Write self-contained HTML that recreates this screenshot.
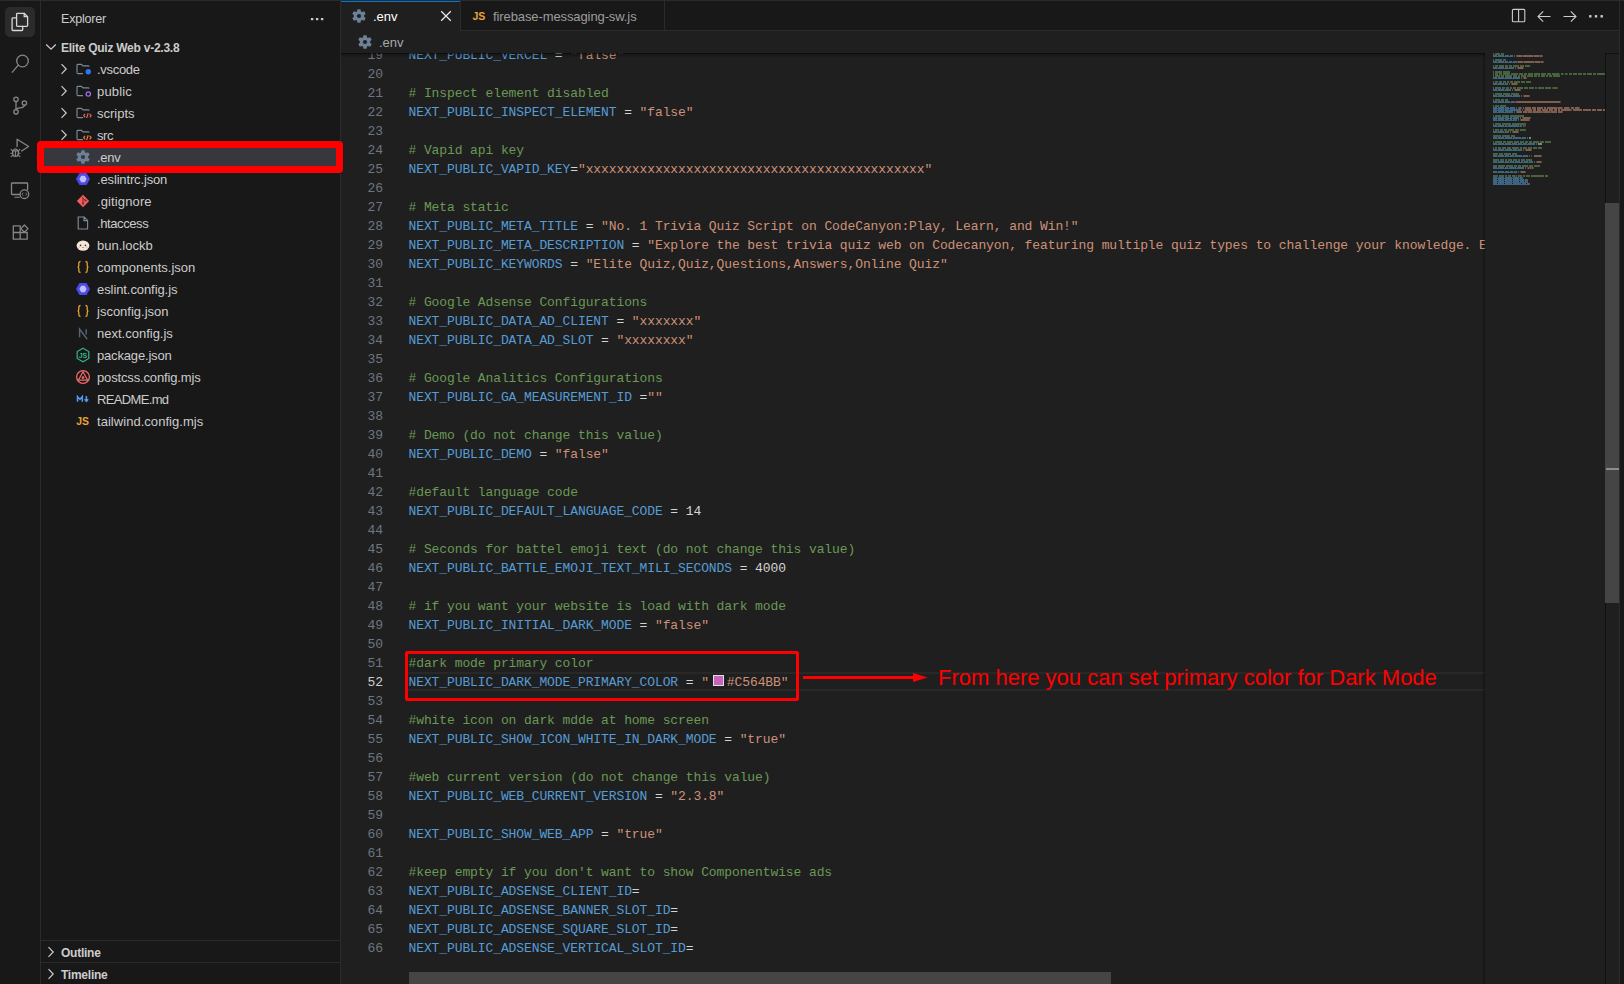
<!DOCTYPE html>
<html><head><meta charset="utf-8"><style>
*{box-sizing:border-box}
html,body{margin:0;padding:0}
body{width:1624px;height:984px;overflow:hidden;background:#181818;position:relative;font-family:"Liberation Sans",sans-serif;color:#cccccc}
.a{position:absolute}
.row{position:absolute;left:41px;width:299px;height:22px;line-height:22px;font-size:13px;white-space:pre;color:#cccccc}
.row .t{position:absolute;left:56px;top:1px}
.row svg{position:absolute;top:3px}
.ln{position:absolute;left:341px;width:42px;text-align:right;font-family:"Liberation Mono",monospace;font-size:13px;letter-spacing:-0.1px;height:19px;line-height:19px;color:#6e7681;white-space:pre}
.cl{position:absolute;left:408.5px;font-family:"Liberation Mono",monospace;font-size:13px;letter-spacing:-0.1px;height:19px;line-height:19px;white-space:pre}
</style></head><body>

<div class="a" style="left:0;top:0;width:1624px;height:1px;background:#2b2b2b"></div>
<div class="a" style="left:40px;top:1px;width:1px;height:983px;background:#2b2b2b"></div>
<div class="a" style="left:340px;top:1px;width:1px;height:983px;background:#2b2b2b"></div>
<div class="a" style="left:5px;top:7px;width:30px;height:30px;border-radius:5px;background:#2b2b2b"></div>
<svg class="a" style="left:0;top:0" width="40" height="250" viewBox="0 0 40 250" fill="none" stroke-linecap="round" stroke-linejoin="round">
<g stroke="#d7d7d7" stroke-width="1.3">
<path d="M16.6 14 Q16.6 13.3 17.4 13.3 H24.2 L27.6 16.7 V25.5 Q27.6 26.3 26.8 26.3 H17.4 Q16.6 26.3 16.6 25.5 Z"/>
<path d="M24.2 13.5 V16.7 H27.4"/>
<path d="M16.4 17.9 H12.9 Q12.1 17.9 12.1 18.7 V29.7 Q12.1 30.5 12.9 30.5 H21.9 Q22.7 30.5 22.7 29.7 V26.5"/>
</g>
<g stroke="#868686" stroke-width="1.3">
<circle cx="22.5" cy="61" r="5.8"/>
<path d="M18.3 65.2 L12.3 72.2"/>
<circle cx="16" cy="99.3" r="2.2"/><circle cx="24.4" cy="103" r="2.2"/><circle cx="16" cy="111.8" r="2.2"/>
<path d="M16 101.5 V109.6"/><path d="M24.4 105.2 Q24.4 107.5 20 107.8 Q16.5 108 16.2 109.6"/>
<path d="M17.1 146.4 V139.2 L28.6 146.5 L21.6 151"/>
<path d="M13.4 150.4 Q15.5 147.2 17.6 150.4"/>
<path d="M12.7 150.9 H18.3 V153.5 Q18.3 156.4 15.5 156.4 Q12.7 156.4 12.7 153.5 Z"/>
<path d="M11.1 149.3 L12.7 150.9 M18.3 150.9 L19.9 149.3 M10.9 153.3 H12.7 M18.3 153.3 H20.1 M11.1 156.7 L12.9 155.1 M18.1 155.1 L19.9 156.7 M15.5 151.6 V155.6" stroke-width="1.1"/>
<path d="M11.5 193.8 V183.6 Q11.5 183 12.1 183 H27 Q27.6 183 27.6 183.6 V189.5"/>
<path d="M11.5 193.8 Q11.5 194.5 12.2 194.5 H19.5"/><path d="M15 197.2 H19.3" stroke-width="1.1"/>
<circle cx="24.4" cy="194.2" r="4.3"/>
<path d="M23 193 L22 194.2 L23 195.4 M25.8 193 L26.8 194.2 L25.8 195.4" stroke-width="0.9"/>
<path d="M13.3 225.8 H20.2 V239.2 H13.3 Z M13.3 232.5 H27.2 V239.2 H20.2"/>
<path d="M20.8 228.6 L24.4 225 L28 228.6 L24.4 232.2 Z"/>
</g>
</svg>
<div class="a" style="left:61px;top:10px;font-size:12.5px;letter-spacing:-0.2px;line-height:18px;color:#cccccc">Explorer</div>
<div class="a" style="left:309px;top:10px;width:16px;height:16px"><svg width="16" height="16"><rect x="1.9" y="8" width="2.4" height="2.2" fill="#cccccc"/><rect x="6.9" y="8" width="2.4" height="2.2" fill="#cccccc"/><rect x="11.9" y="8" width="2.4" height="2.2" fill="#cccccc"/></svg></div>
<svg class="a" style="left:45px;top:43px" width="12" height="8" viewBox="0 0 12 8"><path d="M1.2 1.5 L6 6.2 L10.8 1.5" fill="none" stroke="#cccccc" stroke-width="1.2"/></svg>
<div class="a" style="left:61px;top:37px;height:22px;line-height:22px;font-size:12px;font-weight:700;letter-spacing:-0.25px;color:#cccccc;white-space:pre">Elite Quiz Web v-2.3.8</div>
<div class="row" style="top:58px;">
<svg class="a" style="left:19.3px;top:5px" width="8" height="12" viewBox="0 0 8 12"><path d="M1.5 1.2 L6.2 6 L1.5 10.8" fill="none" stroke="#cccccc" stroke-width="1.2"/></svg>
<svg class="a" style="left:35px;top:5px" width="16" height="13" viewBox="0 0 16 13"><path d="M1 9.5 V2.2 Q1 1.3 1.9 1.3 H5.4 L7 2.9 H12.2 Q13 2.9 13.2 3.6" fill="none" stroke="#7a8a9a" stroke-width="1.15"/><path d="M1 9.5 Q1 10.6 2 10.6 H7" fill="none" stroke="#7a8a9a" stroke-width="1.15"/><circle cx="12.3" cy="8.8" r="2.7" fill="#2f74f0"/></svg>
<span class="t" style="letter-spacing:-0.3px">.vscode</span></div>
<div class="row" style="top:80px;">
<svg class="a" style="left:19.3px;top:5px" width="8" height="12" viewBox="0 0 8 12"><path d="M1.5 1.2 L6.2 6 L1.5 10.8" fill="none" stroke="#cccccc" stroke-width="1.2"/></svg>
<svg class="a" style="left:35px;top:5px" width="16" height="13" viewBox="0 0 16 13"><path d="M1 9.5 V2.2 Q1 1.3 1.9 1.3 H5.4 L7 2.9 H12.2 Q13 2.9 13.2 3.6" fill="none" stroke="#7a8a9a" stroke-width="1.15"/><path d="M1 9.5 Q1 10.6 2 10.6 H7" fill="none" stroke="#7a8a9a" stroke-width="1.15"/><circle cx="12.3" cy="9" r="2.2" fill="none" stroke="#a56ef5" stroke-width="1.2"/></svg>
<span class="t" style="letter-spacing:0.15px">public</span></div>
<div class="row" style="top:102px;">
<svg class="a" style="left:19.3px;top:5px" width="8" height="12" viewBox="0 0 8 12"><path d="M1.5 1.2 L6.2 6 L1.5 10.8" fill="none" stroke="#cccccc" stroke-width="1.2"/></svg>
<svg class="a" style="left:35px;top:5px" width="16" height="13" viewBox="0 0 16 13"><path d="M1 9.5 V2.2 Q1 1.3 1.9 1.3 H5.4 L7 2.9 H12.2 Q13 2.9 13.2 3.6" fill="none" stroke="#7a8a9a" stroke-width="1.15"/><path d="M1 9.5 Q1 10.6 2 10.6 H7" fill="none" stroke="#7a8a9a" stroke-width="1.15"/><path d="M9.2 6.8 L7.6 8.6 L9.2 10.4 M13.6 6.8 L15.2 8.6 L13.6 10.4 M12.2 6.3 L10.6 11" fill="none" stroke="#e06c62" stroke-width="1.1"/></svg>
<span class="t" style="letter-spacing:0px">scripts</span></div>
<div class="row" style="top:124px;">
<svg class="a" style="left:19.3px;top:5px" width="8" height="12" viewBox="0 0 8 12"><path d="M1.5 1.2 L6.2 6 L1.5 10.8" fill="none" stroke="#cccccc" stroke-width="1.2"/></svg>
<svg class="a" style="left:35px;top:5px" width="16" height="13" viewBox="0 0 16 13"><path d="M1 9.5 V2.2 Q1 1.3 1.9 1.3 H5.4 L7 2.9 H12.2 Q13 2.9 13.2 3.6" fill="none" stroke="#7a8a9a" stroke-width="1.15"/><path d="M1 9.5 Q1 10.6 2 10.6 H7" fill="none" stroke="#7a8a9a" stroke-width="1.15"/><path d="M9.2 6.8 L7.6 8.6 L9.2 10.4 M13.6 6.8 L15.2 8.6 L13.6 10.4 M12.2 6.3 L10.6 11" fill="none" stroke="#e87a3a" stroke-width="1.2"/></svg>
<span class="t" style="letter-spacing:-0.4px">src</span></div>
<div class="row" style="top:146px;background:#37373d;">
<svg class="a" style="left:34px;top:3px" width="16" height="16" viewBox="0 0 16 16"><path d="M6.54 1.15 L9.46 1.15 L10.05 3.40 L10.96 3.92 L13.20 3.32 L14.66 5.84 L13.01 7.47 L13.01 8.53 L14.66 10.16 L13.20 12.68 L10.96 12.08 L10.05 12.60 L9.46 14.85 L6.54 14.85 L5.95 12.60 L5.04 12.08 L2.80 12.68 L1.34 10.16 L2.99 8.53 L2.99 7.47 L1.34 5.84 L2.80 3.32 L5.04 3.92 L5.95 3.40 Z" fill="#6d8096"/><circle cx="8" cy="8" r="2.10" fill="#37373d"/></svg>
<span class="t" style="letter-spacing:-0.3px">.env</span></div>
<div class="row" style="top:168px;">
<svg class="a" style="left:34px;top:3px" width="16" height="16" viewBox="0 0 16 16"><path d="M4.5 2 H11.5 L15 8 L11.5 14 H4.5 L1 8 Z" fill="#4d48e8"/><path d="M6.2 4.8 H9.8 L11.6 8 L9.8 11.2 H6.2 L4.4 8 Z" fill="#b9c0ff"/></svg>
<span class="t" style="letter-spacing:-0.15px">.eslintrc.json</span></div>
<div class="row" style="top:190px;">
<svg class="a" style="left:34px;top:3px" width="16" height="16" viewBox="0 0 16 16"><path d="M8 1.8 L14.2 8 L8 14.2 L1.8 8 Z" fill="#ee6060"/><path d="M6.6 3.6 L8 5 V10.6 M8 5.2 L10.6 7.6" stroke="#7a2a2a" stroke-width="1" fill="none"/><circle cx="8" cy="10.6" r="1.1" fill="#7a2a2a"/><circle cx="10.6" cy="7.6" r="1.1" fill="#7a2a2a"/></svg>
<span class="t" style="letter-spacing:0.12px">.gitignore</span></div>
<div class="row" style="top:212px;">
<svg class="a" style="left:34px;top:3px" width="16" height="16" viewBox="0 0 16 16"><path d="M3.2 2 H9.2 L12.6 5.4 V13.4 Q12.6 14 12 14 H3.8 Q3.2 14 3.2 13.4 Z M9 2 V5.6 H12.6" fill="none" stroke="#7a8a9a" stroke-width="1.15"/></svg>
<span class="t" style="letter-spacing:-0.4px">.htaccess</span></div>
<div class="row" style="top:234px;">
<svg class="a" style="left:34px;top:3px" width="16" height="16" viewBox="0 0 16 16"><ellipse cx="8" cy="8.6" rx="6.4" ry="5.2" fill="#f5e8d6"/><circle cx="5.6" cy="8.4" r="0.8" fill="#333"/><circle cx="10.4" cy="8.4" r="0.8" fill="#333"/><path d="M6.8 10 Q8 11.6 9.2 10 Z" fill="#c0392b"/><ellipse cx="4.3" cy="10" rx="1" ry="0.6" fill="#f3a0a8"/><ellipse cx="11.7" cy="10" rx="1" ry="0.6" fill="#f3a0a8"/></svg>
<span class="t" style="letter-spacing:0px">bun.lockb</span></div>
<div class="row" style="top:256px;">
<svg class="a" style="left:34px;top:3px" width="16" height="16" viewBox="0 0 16 16"><path d="M5.5 2.5 Q3.8 2.5 3.8 4.2 V6.6 Q3.8 8 2.6 8 Q3.8 8 3.8 9.4 V11.8 Q3.8 13.5 5.5 13.5 M10.5 2.5 Q12.2 2.5 12.2 4.2 V6.6 Q12.2 8 13.4 8 Q12.2 8 12.2 9.4 V11.8 Q12.2 13.5 10.5 13.5" fill="none" stroke="#e3a22f" stroke-width="1.3"/></svg>
<span class="t" style="letter-spacing:0px">components.json</span></div>
<div class="row" style="top:278px;">
<svg class="a" style="left:34px;top:3px" width="16" height="16" viewBox="0 0 16 16"><path d="M4.5 2 H11.5 L15 8 L11.5 14 H4.5 L1 8 Z" fill="#4d48e8"/><path d="M6.2 4.8 H9.8 L11.6 8 L9.8 11.2 H6.2 L4.4 8 Z" fill="#b9c0ff"/></svg>
<span class="t" style="letter-spacing:-0.08px">eslint.config.js</span></div>
<div class="row" style="top:300px;">
<svg class="a" style="left:34px;top:3px" width="16" height="16" viewBox="0 0 16 16"><path d="M5.5 2.5 Q3.8 2.5 3.8 4.2 V6.6 Q3.8 8 2.6 8 Q3.8 8 3.8 9.4 V11.8 Q3.8 13.5 5.5 13.5 M10.5 2.5 Q12.2 2.5 12.2 4.2 V6.6 Q12.2 8 13.4 8 Q12.2 8 12.2 9.4 V11.8 Q12.2 13.5 10.5 13.5" fill="none" stroke="#e3a22f" stroke-width="1.3"/></svg>
<span class="t" style="letter-spacing:0px">jsconfig.json</span></div>
<div class="row" style="top:322px;">
<svg class="a" style="left:34px;top:3px" width="16" height="16" viewBox="0 0 16 16"><path d="M4.6 12.2 V4.2 L12.2 14.2 M11.2 4.2 V9.5" fill="none" stroke="#586677" stroke-width="1.4"/></svg>
<span class="t" style="letter-spacing:0px">next.config.js</span></div>
<div class="row" style="top:344px;">
<svg class="a" style="left:34px;top:3px" width="16" height="16" viewBox="0 0 16 16"><path d="M8 1.3 L13.8 4.6 V11.4 L8 14.7 L2.2 11.4 V4.6 Z" fill="none" stroke="#33b38e" stroke-width="1.2"/><text x="8" y="10.8" font-size="7" font-weight="700" text-anchor="middle" fill="#33b38e" font-family="Liberation Sans">JS</text></svg>
<span class="t" style="letter-spacing:-0.17px">package.json</span></div>
<div class="row" style="top:366px;">
<svg class="a" style="left:34px;top:3px" width="16" height="16" viewBox="0 0 16 16"><circle cx="8" cy="8" r="6.4" fill="none" stroke="#ee6a6a" stroke-width="1.3"/><path d="M8 2.8 L12.6 11.2 H3.4 Z" fill="none" stroke="#ee6a6a" stroke-width="1.2"/><circle cx="8" cy="8.6" r="1.4" fill="#ee6a6a"/></svg>
<span class="t" style="letter-spacing:-0.15px">postcss.config.mjs</span></div>
<div class="row" style="top:388px;">
<svg class="a" style="left:34px;top:3px" width="16" height="16" viewBox="0 0 16 16"><path d="M2.5 10.8 V5.6 L4.9 8.4 L7.3 5.6 V10.8" fill="none" stroke="#4f9cf0" stroke-width="1.5"/><path d="M11.4 5 V10 M9.6 8.3 L11.4 10.3 L13.2 8.3" fill="none" stroke="#4f9cf0" stroke-width="1.5"/></svg>
<span class="t" style="letter-spacing:-0.65px">README.md</span></div>
<div class="row" style="top:410px;">
<svg class="a" style="left:34px;top:3px" width="16" height="16" viewBox="0 0 16 16"><text x="7.6" y="12.4" font-size="10.4" font-weight="700" text-anchor="middle" fill="#e8a33a" font-family="Liberation Sans">JS</text></svg>
<span class="t" style="letter-spacing:0.04px">tailwind.config.mjs</span></div>
<div class="a" style="left:41px;top:940px;width:299px;height:1px;background:#2b2b2b"></div>
<div class="a" style="left:41px;top:962px;width:299px;height:1px;background:#2b2b2b"></div>
<svg class="a" style="left:47px;top:946px" width="8" height="12" viewBox="0 0 8 12"><path d="M1.5 1.2 L6.2 6 L1.5 10.8" fill="none" stroke="#cccccc" stroke-width="1.2"/></svg>
<div class="a" style="left:61px;top:942px;height:22px;line-height:22px;font-size:12px;font-weight:700;letter-spacing:-0.25px;white-space:pre">Outline</div>
<svg class="a" style="left:47px;top:968px" width="8" height="12" viewBox="0 0 8 12"><path d="M1.5 1.2 L6.2 6 L1.5 10.8" fill="none" stroke="#cccccc" stroke-width="1.2"/></svg>
<div class="a" style="left:61px;top:964px;height:22px;line-height:22px;font-size:12px;font-weight:700;letter-spacing:-0.25px;white-space:pre">Timeline</div>
<div class="a" style="left:341px;top:31px;width:1278px;height:953px;background:#1f1f1f"></div>
<div class="a" style="left:341px;top:1px;width:1278px;height:29px;background:#181818"></div>
<div class="a" style="left:341px;top:30px;width:1278px;height:1px;background:#2b2b2b"></div>
<div class="a" style="left:341px;top:1px;width:119px;height:30px;background:#1f1f1f;border-top:1px solid #0078d4"></div>
<div class="a" style="left:460px;top:1px;width:1px;height:30px;background:#2b2b2b"></div>
<svg class="a" style="left:351px;top:7.8px" width="16" height="16" viewBox="0 0 16 16"><path d="M6.54 1.15 L9.46 1.15 L10.05 3.40 L10.96 3.92 L13.20 3.32 L14.66 5.84 L13.01 7.47 L13.01 8.53 L14.66 10.16 L13.20 12.68 L10.96 12.08 L10.05 12.60 L9.46 14.85 L6.54 14.85 L5.95 12.60 L5.04 12.08 L2.80 12.68 L1.34 10.16 L2.99 8.53 L2.99 7.47 L1.34 5.84 L2.80 3.32 L5.04 3.92 L5.95 3.40 Z" fill="#6d8096"/><circle cx="8" cy="8" r="2.10" fill="#1f1f1f"/></svg>
<div class="a" style="left:373px;top:2px;height:29px;line-height:29px;font-size:13px;color:#ffffff;white-space:pre">.env</div>
<svg class="a" style="left:440px;top:10px" width="12" height="12" viewBox="0 0 12 12"><path d="M1.2 1.2 L10.8 10.8 M10.8 1.2 L1.2 10.8" stroke="#e8e8e8" stroke-width="1.3"/></svg>
<div class="a" style="left:664px;top:1px;width:1px;height:29px;background:#2b2b2b"></div>
<div class="a" style="left:472.5px;top:8.5px;height:14px;line-height:14px;font-size:10.5px;font-weight:700;color:#e8a33a;white-space:pre">JS</div>
<div class="a" style="left:493px;top:2px;height:29px;line-height:29px;font-size:13px;color:#9d9d9d;white-space:pre;letter-spacing:-0.1px">firebase-messaging-sw.js</div>
<svg class="a" style="left:1500px;top:1px" width="119" height="29" viewBox="0 0 119 29" fill="none" stroke="#cccccc" stroke-width="1.1">
<rect x="12.4" y="8.4" width="12.4" height="12.4" rx="1"/><path d="M18.6 8.4 V20.8"/>
<path d="M50.5 15.5 H38 M43.2 10.3 L38 15.5 L43.2 20.7"/>
<path d="M63.5 15.5 H76 M70.8 10.3 L76 15.5 L70.8 20.7"/>
<rect x="89.1" y="14.1" width="2.4" height="2.4" fill="#cccccc" stroke="none"/><rect x="94.8" y="14.1" width="2.4" height="2.4" fill="#cccccc" stroke="none"/><rect x="100.5" y="14.1" width="2.4" height="2.4" fill="#cccccc" stroke="none"/>
</svg>
<div class="a" style="left:1619px;top:1px;width:1px;height:983px;background:#2b2b2b"></div>
<div class="a" style="left:1620px;top:1px;width:4px;height:983px;background:#181818"></div>
<div class="a" style="left:341px;top:53px;width:1264px;height:931px;overflow:hidden">
<div class="a" style="left:-341px;top:-53px;width:1624px;height:984px">
<div class="a" style="left:408px;top:672px;width:1077px;height:19px;border-top:2px solid #282828;border-bottom:2px solid #282828"></div>
<div class="ln" style="top:46px;color:#6e7681">19</div>
<div class="ln" style="top:65px;color:#6e7681">20</div>
<div class="ln" style="top:84px;color:#6e7681">21</div>
<div class="ln" style="top:103px;color:#6e7681">22</div>
<div class="ln" style="top:122px;color:#6e7681">23</div>
<div class="ln" style="top:141px;color:#6e7681">24</div>
<div class="ln" style="top:160px;color:#6e7681">25</div>
<div class="ln" style="top:179px;color:#6e7681">26</div>
<div class="ln" style="top:198px;color:#6e7681">27</div>
<div class="ln" style="top:217px;color:#6e7681">28</div>
<div class="ln" style="top:236px;color:#6e7681">29</div>
<div class="ln" style="top:255px;color:#6e7681">30</div>
<div class="ln" style="top:274px;color:#6e7681">31</div>
<div class="ln" style="top:293px;color:#6e7681">32</div>
<div class="ln" style="top:312px;color:#6e7681">33</div>
<div class="ln" style="top:331px;color:#6e7681">34</div>
<div class="ln" style="top:350px;color:#6e7681">35</div>
<div class="ln" style="top:369px;color:#6e7681">36</div>
<div class="ln" style="top:388px;color:#6e7681">37</div>
<div class="ln" style="top:407px;color:#6e7681">38</div>
<div class="ln" style="top:426px;color:#6e7681">39</div>
<div class="ln" style="top:445px;color:#6e7681">40</div>
<div class="ln" style="top:464px;color:#6e7681">41</div>
<div class="ln" style="top:483px;color:#6e7681">42</div>
<div class="ln" style="top:502px;color:#6e7681">43</div>
<div class="ln" style="top:521px;color:#6e7681">44</div>
<div class="ln" style="top:540px;color:#6e7681">45</div>
<div class="ln" style="top:559px;color:#6e7681">46</div>
<div class="ln" style="top:578px;color:#6e7681">47</div>
<div class="ln" style="top:597px;color:#6e7681">48</div>
<div class="ln" style="top:616px;color:#6e7681">49</div>
<div class="ln" style="top:635px;color:#6e7681">50</div>
<div class="ln" style="top:654px;color:#6e7681">51</div>
<div class="ln" style="top:673px;color:#cccccc">52</div>
<div class="ln" style="top:692px;color:#6e7681">53</div>
<div class="ln" style="top:711px;color:#6e7681">54</div>
<div class="ln" style="top:730px;color:#6e7681">55</div>
<div class="ln" style="top:749px;color:#6e7681">56</div>
<div class="ln" style="top:768px;color:#6e7681">57</div>
<div class="ln" style="top:787px;color:#6e7681">58</div>
<div class="ln" style="top:806px;color:#6e7681">59</div>
<div class="ln" style="top:825px;color:#6e7681">60</div>
<div class="ln" style="top:844px;color:#6e7681">61</div>
<div class="ln" style="top:863px;color:#6e7681">62</div>
<div class="ln" style="top:882px;color:#6e7681">63</div>
<div class="ln" style="top:901px;color:#6e7681">64</div>
<div class="ln" style="top:920px;color:#6e7681">65</div>
<div class="ln" style="top:939px;color:#6e7681">66</div>
<div class="a" style="left:0;top:0;width:1485px;height:984px;overflow:hidden">
<div class="cl" style="top:46px"><span style="color:#569cd6">NEXT_PUBLIC_VERCEL</span><span style="color:#d4d4d4"> = </span><span style="color:#ce9178">&quot;false&quot;</span></div>
<div class="cl" style="top:84px"><span style="color:#6a9955"># Inspect element disabled</span></div>
<div class="cl" style="top:103px"><span style="color:#569cd6">NEXT_PUBLIC_INSPECT_ELEMENT</span><span style="color:#d4d4d4"> = </span><span style="color:#ce9178">&quot;false&quot;</span></div>
<div class="cl" style="top:141px"><span style="color:#6a9955"># Vapid api key</span></div>
<div class="cl" style="top:160px"><span style="color:#569cd6">NEXT_PUBLIC_VAPID_KEY</span><span style="color:#d4d4d4">=</span><span style="color:#ce9178">&quot;xxxxxxxxxxxxxxxxxxxxxxxxxxxxxxxxxxxxxxxxxxxx&quot;</span></div>
<div class="cl" style="top:198px"><span style="color:#6a9955"># Meta static</span></div>
<div class="cl" style="top:217px"><span style="color:#569cd6">NEXT_PUBLIC_META_TITLE</span><span style="color:#d4d4d4"> = </span><span style="color:#ce9178">&quot;No. 1 Trivia Quiz Script on CodeCanyon:Play, Learn, and Win!&quot;</span></div>
<div class="cl" style="top:236px"><span style="color:#569cd6">NEXT_PUBLIC_META_DESCRIPTION</span><span style="color:#d4d4d4"> = </span><span style="color:#ce9178">&quot;Explore the best trivia quiz web on Codecanyon, featuring multiple quiz types to challenge your knowledge. Engage with fun and exciting quizzes&quot;</span></div>
<div class="cl" style="top:255px"><span style="color:#569cd6">NEXT_PUBLIC_KEYWORDS</span><span style="color:#d4d4d4"> = </span><span style="color:#ce9178">&quot;Elite Quiz,Quiz,Questions,Answers,Online Quiz&quot;</span></div>
<div class="cl" style="top:293px"><span style="color:#6a9955"># Google Adsense Configurations</span></div>
<div class="cl" style="top:312px"><span style="color:#569cd6">NEXT_PUBLIC_DATA_AD_CLIENT</span><span style="color:#d4d4d4"> = </span><span style="color:#ce9178">&quot;xxxxxxx&quot;</span></div>
<div class="cl" style="top:331px"><span style="color:#569cd6">NEXT_PUBLIC_DATA_AD_SLOT</span><span style="color:#d4d4d4"> = </span><span style="color:#ce9178">&quot;xxxxxxxx&quot;</span></div>
<div class="cl" style="top:369px"><span style="color:#6a9955"># Google Analitics Configurations</span></div>
<div class="cl" style="top:388px"><span style="color:#569cd6">NEXT_PUBLIC_GA_MEASUREMENT_ID</span><span style="color:#d4d4d4"> =</span><span style="color:#ce9178">&quot;&quot;</span></div>
<div class="cl" style="top:426px"><span style="color:#6a9955"># Demo (do not change this value)</span></div>
<div class="cl" style="top:445px"><span style="color:#569cd6">NEXT_PUBLIC_DEMO</span><span style="color:#d4d4d4"> = </span><span style="color:#ce9178">&quot;false&quot;</span></div>
<div class="cl" style="top:483px"><span style="color:#6a9955">#default language code</span></div>
<div class="cl" style="top:502px"><span style="color:#569cd6">NEXT_PUBLIC_DEFAULT_LANGUAGE_CODE</span><span style="color:#d4d4d4"> = </span><span style="color:#d4d4d4">14</span></div>
<div class="cl" style="top:540px"><span style="color:#6a9955"># Seconds for battel emoji text (do not change this value)</span></div>
<div class="cl" style="top:559px"><span style="color:#569cd6">NEXT_PUBLIC_BATTLE_EMOJI_TEXT_MILI_SECONDS</span><span style="color:#d4d4d4"> = </span><span style="color:#d4d4d4">4000</span></div>
<div class="cl" style="top:597px"><span style="color:#6a9955"># if you want your website is load with dark mode</span></div>
<div class="cl" style="top:616px"><span style="color:#569cd6">NEXT_PUBLIC_INITIAL_DARK_MODE</span><span style="color:#d4d4d4"> = </span><span style="color:#ce9178">&quot;false&quot;</span></div>
<div class="cl" style="top:654px"><span style="color:#6a9955">#dark mode primary color</span></div>
<div class="cl" style="top:673px"><span style="color:#569cd6">NEXT_PUBLIC_DARK_MODE_PRIMARY_COLOR</span><span style="color:#d4d4d4"> = </span><span style="color:#ce9178">&quot;</span><span style="display:inline-block;width:18px;height:1px;position:relative"><span style="position:absolute;left:4px;top:-10px;width:11px;height:11px;background:#c564bb;border:1px solid #e0e0e0"></span></span><span style="color:#ce9178">#C564BB&quot;</span></div>
<div class="cl" style="top:711px"><span style="color:#6a9955">#white icon on dark mdde at home screen</span></div>
<div class="cl" style="top:730px"><span style="color:#569cd6">NEXT_PUBLIC_SHOW_ICON_WHITE_IN_DARK_MODE</span><span style="color:#d4d4d4"> = </span><span style="color:#ce9178">&quot;true&quot;</span></div>
<div class="cl" style="top:768px"><span style="color:#6a9955">#web current version (do not change this value)</span></div>
<div class="cl" style="top:787px"><span style="color:#569cd6">NEXT_PUBLIC_WEB_CURRENT_VERSION</span><span style="color:#d4d4d4"> = </span><span style="color:#ce9178">&quot;2.3.8&quot;</span></div>
<div class="cl" style="top:825px"><span style="color:#569cd6">NEXT_PUBLIC_SHOW_WEB_APP</span><span style="color:#d4d4d4"> = </span><span style="color:#ce9178">&quot;true&quot;</span></div>
<div class="cl" style="top:863px"><span style="color:#6a9955">#keep empty if you don&#x27;t want to show Componentwise ads</span></div>
<div class="cl" style="top:882px"><span style="color:#569cd6">NEXT_PUBLIC_ADSENSE_CLIENT_ID</span><span style="color:#d4d4d4">=</span></div>
<div class="cl" style="top:901px"><span style="color:#569cd6">NEXT_PUBLIC_ADSENSE_BANNER_SLOT_ID</span><span style="color:#d4d4d4">=</span></div>
<div class="cl" style="top:920px"><span style="color:#569cd6">NEXT_PUBLIC_ADSENSE_SQUARE_SLOT_ID</span><span style="color:#d4d4d4">=</span></div>
<div class="cl" style="top:939px"><span style="color:#569cd6">NEXT_PUBLIC_ADSENSE_VERTICAL_SLOT_ID</span><span style="color:#d4d4d4">=</span></div>
</div>
</div></div>
<div class="a" style="left:341px;top:31px;width:1278px;height:22px;background:#1f1f1f"></div>
<svg class="a" style="left:357px;top:34px" width="16" height="16" viewBox="0 0 16 16"><path d="M6.54 1.15 L9.46 1.15 L10.05 3.40 L10.96 3.92 L13.20 3.32 L14.66 5.84 L13.01 7.47 L13.01 8.53 L14.66 10.16 L13.20 12.68 L10.96 12.08 L10.05 12.60 L9.46 14.85 L6.54 14.85 L5.95 12.60 L5.04 12.08 L2.80 12.68 L1.34 10.16 L2.99 8.53 L2.99 7.47 L1.34 5.84 L2.80 3.32 L5.04 3.92 L5.95 3.40 Z" fill="#6d8096"/><circle cx="8" cy="8" r="2.10" fill="#1f1f1f"/></svg>
<div class="a" style="left:379px;top:32px;height:22px;line-height:22px;font-size:13px;color:#a9a9a9;white-space:pre">.env</div>
<div class="a" style="left:341px;top:53px;width:1144px;height:5px;background:linear-gradient(rgba(0,0,0,0.75),rgba(0,0,0,0.25) 30%,rgba(0,0,0,0))"></div>
<div class="a" style="left:1493px;top:53px;width:1px;height:2px;background:rgba(106,153,85,0.55)"></div>
<div class="a" style="left:1495px;top:53px;width:5px;height:2px;background:rgba(106,153,85,0.55)"></div>
<div class="a" style="left:1501px;top:53px;width:3px;height:2px;background:rgba(106,153,85,0.55)"></div>
<div class="a" style="left:1493px;top:55px;width:4px;height:2px;background:rgba(86,156,214,0.55)"></div>
<div class="a" style="left:1497px;top:56px;width:1px;height:1px;background:rgba(86,156,214,0.5)"></div>
<div class="a" style="left:1498px;top:55px;width:6px;height:2px;background:rgba(86,156,214,0.55)"></div>
<div class="a" style="left:1504px;top:56px;width:1px;height:1px;background:rgba(86,156,214,0.5)"></div>
<div class="a" style="left:1505px;top:55px;width:4px;height:2px;background:rgba(86,156,214,0.55)"></div>
<div class="a" style="left:1509px;top:56px;width:1px;height:1px;background:rgba(86,156,214,0.5)"></div>
<div class="a" style="left:1510px;top:55px;width:3px;height:2px;background:rgba(86,156,214,0.55)"></div>
<div class="a" style="left:1514px;top:55px;width:1px;height:2px;background:rgba(212,212,212,0.3)"></div>
<div class="a" style="left:1516px;top:55px;width:1px;height:2px;background:rgba(206,145,120,0.3)"></div>
<div class="a" style="left:1517px;top:55px;width:5px;height:2px;background:rgba(206,145,120,0.55)"></div>
<div class="a" style="left:1522px;top:55px;width:1px;height:2px;background:rgba(206,145,120,0.3)"></div>
<div class="a" style="left:1523px;top:55px;width:10px;height:2px;background:rgba(206,145,120,0.55)"></div>
<div class="a" style="left:1533px;top:55px;width:1px;height:2px;background:rgba(206,145,120,0.3)"></div>
<div class="a" style="left:1534px;top:55px;width:5px;height:2px;background:rgba(206,145,120,0.55)"></div>
<div class="a" style="left:1539px;top:55px;width:1px;height:2px;background:rgba(206,145,120,0.3)"></div>
<div class="a" style="left:1540px;top:55px;width:2px;height:2px;background:rgba(206,145,120,0.55)"></div>
<div class="a" style="left:1542px;top:55px;width:1px;height:2px;background:rgba(206,145,120,0.3)"></div>
<div class="a" style="left:1493px;top:59px;width:1px;height:2px;background:rgba(106,153,85,0.55)"></div>
<div class="a" style="left:1495px;top:59px;width:7px;height:2px;background:rgba(106,153,85,0.55)"></div>
<div class="a" style="left:1503px;top:59px;width:3px;height:2px;background:rgba(106,153,85,0.55)"></div>
<div class="a" style="left:1493px;top:61px;width:4px;height:2px;background:rgba(86,156,214,0.55)"></div>
<div class="a" style="left:1497px;top:62px;width:1px;height:1px;background:rgba(86,156,214,0.5)"></div>
<div class="a" style="left:1498px;top:61px;width:6px;height:2px;background:rgba(86,156,214,0.55)"></div>
<div class="a" style="left:1504px;top:62px;width:1px;height:1px;background:rgba(86,156,214,0.5)"></div>
<div class="a" style="left:1505px;top:61px;width:3px;height:2px;background:rgba(86,156,214,0.55)"></div>
<div class="a" style="left:1508px;top:62px;width:1px;height:1px;background:rgba(86,156,214,0.5)"></div>
<div class="a" style="left:1509px;top:61px;width:3px;height:2px;background:rgba(86,156,214,0.55)"></div>
<div class="a" style="left:1512px;top:62px;width:1px;height:1px;background:rgba(86,156,214,0.5)"></div>
<div class="a" style="left:1513px;top:61px;width:3px;height:2px;background:rgba(86,156,214,0.55)"></div>
<div class="a" style="left:1516px;top:61px;width:1px;height:2px;background:rgba(212,212,212,0.3)"></div>
<div class="a" style="left:1517px;top:61px;width:1px;height:2px;background:rgba(206,145,120,0.3)"></div>
<div class="a" style="left:1518px;top:61px;width:5px;height:2px;background:rgba(206,145,120,0.55)"></div>
<div class="a" style="left:1523px;top:61px;width:1px;height:2px;background:rgba(206,145,120,0.3)"></div>
<div class="a" style="left:1524px;top:61px;width:10px;height:2px;background:rgba(206,145,120,0.55)"></div>
<div class="a" style="left:1534px;top:61px;width:1px;height:2px;background:rgba(206,145,120,0.3)"></div>
<div class="a" style="left:1535px;top:61px;width:5px;height:2px;background:rgba(206,145,120,0.55)"></div>
<div class="a" style="left:1540px;top:61px;width:1px;height:2px;background:rgba(206,145,120,0.3)"></div>
<div class="a" style="left:1541px;top:61px;width:2px;height:2px;background:rgba(206,145,120,0.55)"></div>
<div class="a" style="left:1543px;top:61px;width:1px;height:2px;background:rgba(206,145,120,0.3)"></div>
<div class="a" style="left:1493px;top:65px;width:1px;height:2px;background:rgba(106,153,85,0.55)"></div>
<div class="a" style="left:1495px;top:65px;width:3px;height:2px;background:rgba(106,153,85,0.55)"></div>
<div class="a" style="left:1499px;top:65px;width:5px;height:2px;background:rgba(106,153,85,0.55)"></div>
<div class="a" style="left:1505px;top:65px;width:3px;height:2px;background:rgba(106,153,85,0.55)"></div>
<div class="a" style="left:1509px;top:65px;width:3px;height:2px;background:rgba(106,153,85,0.55)"></div>
<div class="a" style="left:1513px;top:65px;width:6px;height:2px;background:rgba(106,153,85,0.55)"></div>
<div class="a" style="left:1520px;top:65px;width:4px;height:2px;background:rgba(106,153,85,0.55)"></div>
<div class="a" style="left:1525px;top:65px;width:5px;height:2px;background:rgba(106,153,85,0.55)"></div>
<div class="a" style="left:1493px;top:67px;width:4px;height:2px;background:rgba(86,156,214,0.55)"></div>
<div class="a" style="left:1497px;top:68px;width:1px;height:1px;background:rgba(86,156,214,0.5)"></div>
<div class="a" style="left:1498px;top:67px;width:6px;height:2px;background:rgba(86,156,214,0.55)"></div>
<div class="a" style="left:1504px;top:68px;width:1px;height:1px;background:rgba(86,156,214,0.5)"></div>
<div class="a" style="left:1505px;top:67px;width:3px;height:2px;background:rgba(86,156,214,0.55)"></div>
<div class="a" style="left:1508px;top:68px;width:1px;height:1px;background:rgba(86,156,214,0.5)"></div>
<div class="a" style="left:1509px;top:67px;width:5px;height:2px;background:rgba(86,156,214,0.55)"></div>
<div class="a" style="left:1515px;top:67px;width:1px;height:2px;background:rgba(212,212,212,0.3)"></div>
<div class="a" style="left:1517px;top:67px;width:1px;height:2px;background:rgba(206,145,120,0.3)"></div>
<div class="a" style="left:1518px;top:67px;width:5px;height:2px;background:rgba(206,145,120,0.55)"></div>
<div class="a" style="left:1523px;top:67px;width:1px;height:2px;background:rgba(206,145,120,0.3)"></div>
<div class="a" style="left:1493px;top:71px;width:1px;height:2px;background:rgba(106,153,85,0.55)"></div>
<div class="a" style="left:1495px;top:71px;width:7px;height:2px;background:rgba(106,153,85,0.55)"></div>
<div class="a" style="left:1503px;top:71px;width:7px;height:2px;background:rgba(106,153,85,0.55)"></div>
<div class="a" style="left:1493px;top:73px;width:1px;height:2px;background:rgba(106,153,85,0.55)"></div>
<div class="a" style="left:1495px;top:73px;width:3px;height:2px;background:rgba(106,153,85,0.55)"></div>
<div class="a" style="left:1499px;top:73px;width:3px;height:2px;background:rgba(106,153,85,0.55)"></div>
<div class="a" style="left:1503px;top:73px;width:7px;height:2px;background:rgba(106,153,85,0.55)"></div>
<div class="a" style="left:1511px;top:73px;width:7px;height:2px;background:rgba(106,153,85,0.55)"></div>
<div class="a" style="left:1519px;top:73px;width:4px;height:2px;background:rgba(106,153,85,0.55)"></div>
<div class="a" style="left:1524px;top:73px;width:3px;height:2px;background:rgba(106,153,85,0.55)"></div>
<div class="a" style="left:1528px;top:73px;width:5px;height:2px;background:rgba(106,153,85,0.55)"></div>
<div class="a" style="left:1534px;top:73px;width:6px;height:2px;background:rgba(106,153,85,0.55)"></div>
<div class="a" style="left:1541px;top:73px;width:5px;height:2px;background:rgba(106,153,85,0.55)"></div>
<div class="a" style="left:1547px;top:73px;width:4px;height:2px;background:rgba(106,153,85,0.55)"></div>
<div class="a" style="left:1552px;top:73px;width:7px;height:2px;background:rgba(106,153,85,0.55)"></div>
<div class="a" style="left:1559px;top:73px;width:1px;height:2px;background:rgba(106,153,85,0.3)"></div>
<div class="a" style="left:1561px;top:73px;width:2px;height:2px;background:rgba(106,153,85,0.55)"></div>
<div class="a" style="left:1563px;top:73px;width:1px;height:2px;background:rgba(106,153,85,0.3)"></div>
<div class="a" style="left:1565px;top:73px;width:2px;height:2px;background:rgba(106,153,85,0.55)"></div>
<div class="a" style="left:1567px;top:73px;width:1px;height:2px;background:rgba(106,153,85,0.3)"></div>
<div class="a" style="left:1569px;top:73px;width:3px;height:2px;background:rgba(106,153,85,0.55)"></div>
<div class="a" style="left:1573px;top:73px;width:4px;height:2px;background:rgba(106,153,85,0.55)"></div>
<div class="a" style="left:1578px;top:73px;width:4px;height:2px;background:rgba(106,153,85,0.55)"></div>
<div class="a" style="left:1583px;top:73px;width:3px;height:2px;background:rgba(106,153,85,0.55)"></div>
<div class="a" style="left:1587px;top:73px;width:5px;height:2px;background:rgba(106,153,85,0.55)"></div>
<div class="a" style="left:1593px;top:73px;width:3px;height:2px;background:rgba(106,153,85,0.55)"></div>
<div class="a" style="left:1597px;top:73px;width:8px;height:2px;background:rgba(106,153,85,0.55)"></div>
<div class="a" style="left:1493px;top:75px;width:1px;height:2px;background:rgba(106,153,85,0.55)"></div>
<div class="a" style="left:1495px;top:75px;width:5px;height:2px;background:rgba(106,153,85,0.55)"></div>
<div class="a" style="left:1501px;top:75px;width:3px;height:2px;background:rgba(106,153,85,0.55)"></div>
<div class="a" style="left:1505px;top:75px;width:7px;height:2px;background:rgba(106,153,85,0.55)"></div>
<div class="a" style="left:1513px;top:75px;width:4px;height:2px;background:rgba(106,153,85,0.55)"></div>
<div class="a" style="left:1518px;top:75px;width:2px;height:2px;background:rgba(106,153,85,0.55)"></div>
<div class="a" style="left:1521px;top:75px;width:5px;height:2px;background:rgba(106,153,85,0.55)"></div>
<div class="a" style="left:1527px;top:75px;width:6px;height:2px;background:rgba(106,153,85,0.55)"></div>
<div class="a" style="left:1534px;top:75px;width:3px;height:2px;background:rgba(106,153,85,0.55)"></div>
<div class="a" style="left:1538px;top:75px;width:2px;height:2px;background:rgba(106,153,85,0.55)"></div>
<div class="a" style="left:1541px;top:75px;width:4px;height:2px;background:rgba(106,153,85,0.55)"></div>
<div class="a" style="left:1546px;top:75px;width:2px;height:2px;background:rgba(106,153,85,0.55)"></div>
<div class="a" style="left:1549px;top:75px;width:3px;height:2px;background:rgba(106,153,85,0.55)"></div>
<div class="a" style="left:1553px;top:75px;width:7px;height:2px;background:rgba(106,153,85,0.55)"></div>
<div class="a" style="left:1493px;top:77px;width:4px;height:2px;background:rgba(86,156,214,0.55)"></div>
<div class="a" style="left:1497px;top:78px;width:1px;height:1px;background:rgba(86,156,214,0.5)"></div>
<div class="a" style="left:1498px;top:77px;width:6px;height:2px;background:rgba(86,156,214,0.55)"></div>
<div class="a" style="left:1504px;top:78px;width:1px;height:1px;background:rgba(86,156,214,0.5)"></div>
<div class="a" style="left:1505px;top:77px;width:7px;height:2px;background:rgba(86,156,214,0.55)"></div>
<div class="a" style="left:1512px;top:78px;width:1px;height:1px;background:rgba(86,156,214,0.5)"></div>
<div class="a" style="left:1513px;top:77px;width:7px;height:2px;background:rgba(86,156,214,0.55)"></div>
<div class="a" style="left:1521px;top:77px;width:1px;height:2px;background:rgba(212,212,212,0.3)"></div>
<div class="a" style="left:1523px;top:77px;width:1px;height:2px;background:rgba(206,145,120,0.3)"></div>
<div class="a" style="left:1524px;top:77px;width:2px;height:2px;background:rgba(206,145,120,0.55)"></div>
<div class="a" style="left:1526px;top:77px;width:1px;height:2px;background:rgba(206,145,120,0.3)"></div>
<div class="a" style="left:1493px;top:81px;width:1px;height:2px;background:rgba(106,153,85,0.55)"></div>
<div class="a" style="left:1495px;top:81px;width:3px;height:2px;background:rgba(106,153,85,0.55)"></div>
<div class="a" style="left:1499px;top:81px;width:3px;height:2px;background:rgba(106,153,85,0.55)"></div>
<div class="a" style="left:1503px;top:81px;width:3px;height:2px;background:rgba(106,153,85,0.55)"></div>
<div class="a" style="left:1507px;top:81px;width:2px;height:2px;background:rgba(106,153,85,0.55)"></div>
<div class="a" style="left:1510px;top:81px;width:3px;height:2px;background:rgba(106,153,85,0.55)"></div>
<div class="a" style="left:1514px;top:81px;width:6px;height:2px;background:rgba(106,153,85,0.55)"></div>
<div class="a" style="left:1521px;top:81px;width:4px;height:2px;background:rgba(106,153,85,0.55)"></div>
<div class="a" style="left:1526px;top:81px;width:5px;height:2px;background:rgba(106,153,85,0.55)"></div>
<div class="a" style="left:1493px;top:83px;width:4px;height:2px;background:rgba(86,156,214,0.55)"></div>
<div class="a" style="left:1497px;top:84px;width:1px;height:1px;background:rgba(86,156,214,0.5)"></div>
<div class="a" style="left:1498px;top:83px;width:6px;height:2px;background:rgba(86,156,214,0.55)"></div>
<div class="a" style="left:1504px;top:84px;width:1px;height:1px;background:rgba(86,156,214,0.5)"></div>
<div class="a" style="left:1505px;top:83px;width:3px;height:2px;background:rgba(86,156,214,0.55)"></div>
<div class="a" style="left:1509px;top:83px;width:1px;height:2px;background:rgba(212,212,212,0.3)"></div>
<div class="a" style="left:1511px;top:83px;width:1px;height:2px;background:rgba(206,145,120,0.3)"></div>
<div class="a" style="left:1512px;top:83px;width:5px;height:2px;background:rgba(206,145,120,0.55)"></div>
<div class="a" style="left:1517px;top:83px;width:1px;height:2px;background:rgba(206,145,120,0.3)"></div>
<div class="a" style="left:1493px;top:87px;width:1px;height:2px;background:rgba(106,153,85,0.55)"></div>
<div class="a" style="left:1495px;top:87px;width:6px;height:2px;background:rgba(106,153,85,0.55)"></div>
<div class="a" style="left:1502px;top:87px;width:3px;height:2px;background:rgba(106,153,85,0.55)"></div>
<div class="a" style="left:1506px;top:87px;width:3px;height:2px;background:rgba(106,153,85,0.55)"></div>
<div class="a" style="left:1510px;top:87px;width:2px;height:2px;background:rgba(106,153,85,0.55)"></div>
<div class="a" style="left:1513px;top:87px;width:3px;height:2px;background:rgba(106,153,85,0.55)"></div>
<div class="a" style="left:1517px;top:87px;width:6px;height:2px;background:rgba(106,153,85,0.55)"></div>
<div class="a" style="left:1524px;top:87px;width:4px;height:2px;background:rgba(106,153,85,0.55)"></div>
<div class="a" style="left:1529px;top:87px;width:5px;height:2px;background:rgba(106,153,85,0.55)"></div>
<div class="a" style="left:1535px;top:87px;width:2px;height:2px;background:rgba(106,153,85,0.55)"></div>
<div class="a" style="left:1538px;top:87px;width:6px;height:2px;background:rgba(106,153,85,0.55)"></div>
<div class="a" style="left:1545px;top:87px;width:6px;height:2px;background:rgba(106,153,85,0.55)"></div>
<div class="a" style="left:1552px;top:87px;width:1px;height:2px;background:rgba(106,153,85,0.3)"></div>
<div class="a" style="left:1553px;top:87px;width:4px;height:2px;background:rgba(106,153,85,0.55)"></div>
<div class="a" style="left:1557px;top:87px;width:1px;height:2px;background:rgba(106,153,85,0.3)"></div>
<div class="a" style="left:1493px;top:89px;width:4px;height:2px;background:rgba(86,156,214,0.55)"></div>
<div class="a" style="left:1497px;top:90px;width:1px;height:1px;background:rgba(86,156,214,0.5)"></div>
<div class="a" style="left:1498px;top:89px;width:6px;height:2px;background:rgba(86,156,214,0.55)"></div>
<div class="a" style="left:1504px;top:90px;width:1px;height:1px;background:rgba(86,156,214,0.5)"></div>
<div class="a" style="left:1505px;top:89px;width:6px;height:2px;background:rgba(86,156,214,0.55)"></div>
<div class="a" style="left:1512px;top:89px;width:1px;height:2px;background:rgba(212,212,212,0.3)"></div>
<div class="a" style="left:1514px;top:89px;width:1px;height:2px;background:rgba(206,145,120,0.3)"></div>
<div class="a" style="left:1515px;top:89px;width:5px;height:2px;background:rgba(206,145,120,0.55)"></div>
<div class="a" style="left:1520px;top:89px;width:1px;height:2px;background:rgba(206,145,120,0.3)"></div>
<div class="a" style="left:1493px;top:93px;width:1px;height:2px;background:rgba(106,153,85,0.55)"></div>
<div class="a" style="left:1495px;top:93px;width:7px;height:2px;background:rgba(106,153,85,0.55)"></div>
<div class="a" style="left:1503px;top:93px;width:7px;height:2px;background:rgba(106,153,85,0.55)"></div>
<div class="a" style="left:1511px;top:93px;width:8px;height:2px;background:rgba(106,153,85,0.55)"></div>
<div class="a" style="left:1493px;top:95px;width:4px;height:2px;background:rgba(86,156,214,0.55)"></div>
<div class="a" style="left:1497px;top:96px;width:1px;height:1px;background:rgba(86,156,214,0.5)"></div>
<div class="a" style="left:1498px;top:95px;width:6px;height:2px;background:rgba(86,156,214,0.55)"></div>
<div class="a" style="left:1504px;top:96px;width:1px;height:1px;background:rgba(86,156,214,0.5)"></div>
<div class="a" style="left:1505px;top:95px;width:7px;height:2px;background:rgba(86,156,214,0.55)"></div>
<div class="a" style="left:1512px;top:96px;width:1px;height:1px;background:rgba(86,156,214,0.5)"></div>
<div class="a" style="left:1513px;top:95px;width:7px;height:2px;background:rgba(86,156,214,0.55)"></div>
<div class="a" style="left:1521px;top:95px;width:1px;height:2px;background:rgba(212,212,212,0.3)"></div>
<div class="a" style="left:1523px;top:95px;width:1px;height:2px;background:rgba(206,145,120,0.3)"></div>
<div class="a" style="left:1524px;top:95px;width:5px;height:2px;background:rgba(206,145,120,0.55)"></div>
<div class="a" style="left:1529px;top:95px;width:1px;height:2px;background:rgba(206,145,120,0.3)"></div>
<div class="a" style="left:1493px;top:99px;width:1px;height:2px;background:rgba(106,153,85,0.55)"></div>
<div class="a" style="left:1495px;top:99px;width:5px;height:2px;background:rgba(106,153,85,0.55)"></div>
<div class="a" style="left:1501px;top:99px;width:3px;height:2px;background:rgba(106,153,85,0.55)"></div>
<div class="a" style="left:1505px;top:99px;width:3px;height:2px;background:rgba(106,153,85,0.55)"></div>
<div class="a" style="left:1493px;top:101px;width:4px;height:2px;background:rgba(86,156,214,0.55)"></div>
<div class="a" style="left:1497px;top:102px;width:1px;height:1px;background:rgba(86,156,214,0.5)"></div>
<div class="a" style="left:1498px;top:101px;width:6px;height:2px;background:rgba(86,156,214,0.55)"></div>
<div class="a" style="left:1504px;top:102px;width:1px;height:1px;background:rgba(86,156,214,0.5)"></div>
<div class="a" style="left:1505px;top:101px;width:5px;height:2px;background:rgba(86,156,214,0.55)"></div>
<div class="a" style="left:1510px;top:102px;width:1px;height:1px;background:rgba(86,156,214,0.5)"></div>
<div class="a" style="left:1511px;top:101px;width:3px;height:2px;background:rgba(86,156,214,0.55)"></div>
<div class="a" style="left:1514px;top:101px;width:1px;height:2px;background:rgba(212,212,212,0.3)"></div>
<div class="a" style="left:1515px;top:101px;width:1px;height:2px;background:rgba(206,145,120,0.3)"></div>
<div class="a" style="left:1516px;top:101px;width:44px;height:2px;background:rgba(206,145,120,0.55)"></div>
<div class="a" style="left:1560px;top:101px;width:1px;height:2px;background:rgba(206,145,120,0.3)"></div>
<div class="a" style="left:1493px;top:105px;width:1px;height:2px;background:rgba(106,153,85,0.55)"></div>
<div class="a" style="left:1495px;top:105px;width:4px;height:2px;background:rgba(106,153,85,0.55)"></div>
<div class="a" style="left:1500px;top:105px;width:6px;height:2px;background:rgba(106,153,85,0.55)"></div>
<div class="a" style="left:1493px;top:107px;width:4px;height:2px;background:rgba(86,156,214,0.55)"></div>
<div class="a" style="left:1497px;top:108px;width:1px;height:1px;background:rgba(86,156,214,0.5)"></div>
<div class="a" style="left:1498px;top:107px;width:6px;height:2px;background:rgba(86,156,214,0.55)"></div>
<div class="a" style="left:1504px;top:108px;width:1px;height:1px;background:rgba(86,156,214,0.5)"></div>
<div class="a" style="left:1505px;top:107px;width:4px;height:2px;background:rgba(86,156,214,0.55)"></div>
<div class="a" style="left:1509px;top:108px;width:1px;height:1px;background:rgba(86,156,214,0.5)"></div>
<div class="a" style="left:1510px;top:107px;width:5px;height:2px;background:rgba(86,156,214,0.55)"></div>
<div class="a" style="left:1516px;top:107px;width:1px;height:2px;background:rgba(212,212,212,0.3)"></div>
<div class="a" style="left:1518px;top:107px;width:1px;height:2px;background:rgba(206,145,120,0.3)"></div>
<div class="a" style="left:1519px;top:107px;width:2px;height:2px;background:rgba(206,145,120,0.55)"></div>
<div class="a" style="left:1521px;top:107px;width:1px;height:2px;background:rgba(206,145,120,0.3)"></div>
<div class="a" style="left:1523px;top:107px;width:1px;height:2px;background:rgba(206,145,120,0.55)"></div>
<div class="a" style="left:1525px;top:107px;width:6px;height:2px;background:rgba(206,145,120,0.55)"></div>
<div class="a" style="left:1532px;top:107px;width:4px;height:2px;background:rgba(206,145,120,0.55)"></div>
<div class="a" style="left:1537px;top:107px;width:6px;height:2px;background:rgba(206,145,120,0.55)"></div>
<div class="a" style="left:1544px;top:107px;width:2px;height:2px;background:rgba(206,145,120,0.55)"></div>
<div class="a" style="left:1547px;top:107px;width:10px;height:2px;background:rgba(206,145,120,0.55)"></div>
<div class="a" style="left:1557px;top:107px;width:1px;height:2px;background:rgba(206,145,120,0.3)"></div>
<div class="a" style="left:1558px;top:107px;width:4px;height:2px;background:rgba(206,145,120,0.55)"></div>
<div class="a" style="left:1562px;top:107px;width:1px;height:2px;background:rgba(206,145,120,0.3)"></div>
<div class="a" style="left:1564px;top:107px;width:5px;height:2px;background:rgba(206,145,120,0.55)"></div>
<div class="a" style="left:1569px;top:107px;width:1px;height:2px;background:rgba(206,145,120,0.3)"></div>
<div class="a" style="left:1571px;top:107px;width:3px;height:2px;background:rgba(206,145,120,0.55)"></div>
<div class="a" style="left:1575px;top:107px;width:4px;height:2px;background:rgba(206,145,120,0.55)"></div>
<div class="a" style="left:1579px;top:107px;width:1px;height:2px;background:rgba(206,145,120,0.3)"></div>
<div class="a" style="left:1493px;top:109px;width:4px;height:2px;background:rgba(86,156,214,0.55)"></div>
<div class="a" style="left:1497px;top:110px;width:1px;height:1px;background:rgba(86,156,214,0.5)"></div>
<div class="a" style="left:1498px;top:109px;width:6px;height:2px;background:rgba(86,156,214,0.55)"></div>
<div class="a" style="left:1504px;top:110px;width:1px;height:1px;background:rgba(86,156,214,0.5)"></div>
<div class="a" style="left:1505px;top:109px;width:4px;height:2px;background:rgba(86,156,214,0.55)"></div>
<div class="a" style="left:1509px;top:110px;width:1px;height:1px;background:rgba(86,156,214,0.5)"></div>
<div class="a" style="left:1510px;top:109px;width:11px;height:2px;background:rgba(86,156,214,0.55)"></div>
<div class="a" style="left:1522px;top:109px;width:1px;height:2px;background:rgba(212,212,212,0.3)"></div>
<div class="a" style="left:1524px;top:109px;width:1px;height:2px;background:rgba(206,145,120,0.3)"></div>
<div class="a" style="left:1525px;top:109px;width:7px;height:2px;background:rgba(206,145,120,0.55)"></div>
<div class="a" style="left:1533px;top:109px;width:3px;height:2px;background:rgba(206,145,120,0.55)"></div>
<div class="a" style="left:1537px;top:109px;width:4px;height:2px;background:rgba(206,145,120,0.55)"></div>
<div class="a" style="left:1542px;top:109px;width:6px;height:2px;background:rgba(206,145,120,0.55)"></div>
<div class="a" style="left:1549px;top:109px;width:4px;height:2px;background:rgba(206,145,120,0.55)"></div>
<div class="a" style="left:1554px;top:109px;width:3px;height:2px;background:rgba(206,145,120,0.55)"></div>
<div class="a" style="left:1558px;top:109px;width:2px;height:2px;background:rgba(206,145,120,0.55)"></div>
<div class="a" style="left:1561px;top:109px;width:10px;height:2px;background:rgba(206,145,120,0.55)"></div>
<div class="a" style="left:1571px;top:109px;width:1px;height:2px;background:rgba(206,145,120,0.3)"></div>
<div class="a" style="left:1573px;top:109px;width:9px;height:2px;background:rgba(206,145,120,0.55)"></div>
<div class="a" style="left:1583px;top:109px;width:8px;height:2px;background:rgba(206,145,120,0.55)"></div>
<div class="a" style="left:1592px;top:109px;width:4px;height:2px;background:rgba(206,145,120,0.55)"></div>
<div class="a" style="left:1597px;top:109px;width:5px;height:2px;background:rgba(206,145,120,0.55)"></div>
<div class="a" style="left:1603px;top:109px;width:2px;height:2px;background:rgba(206,145,120,0.55)"></div>
<div class="a" style="left:1493px;top:111px;width:4px;height:2px;background:rgba(86,156,214,0.55)"></div>
<div class="a" style="left:1497px;top:112px;width:1px;height:1px;background:rgba(86,156,214,0.5)"></div>
<div class="a" style="left:1498px;top:111px;width:6px;height:2px;background:rgba(86,156,214,0.55)"></div>
<div class="a" style="left:1504px;top:112px;width:1px;height:1px;background:rgba(86,156,214,0.5)"></div>
<div class="a" style="left:1505px;top:111px;width:8px;height:2px;background:rgba(86,156,214,0.55)"></div>
<div class="a" style="left:1514px;top:111px;width:1px;height:2px;background:rgba(212,212,212,0.3)"></div>
<div class="a" style="left:1516px;top:111px;width:1px;height:2px;background:rgba(206,145,120,0.3)"></div>
<div class="a" style="left:1517px;top:111px;width:5px;height:2px;background:rgba(206,145,120,0.55)"></div>
<div class="a" style="left:1523px;top:111px;width:4px;height:2px;background:rgba(206,145,120,0.55)"></div>
<div class="a" style="left:1527px;top:111px;width:1px;height:2px;background:rgba(206,145,120,0.3)"></div>
<div class="a" style="left:1528px;top:111px;width:4px;height:2px;background:rgba(206,145,120,0.55)"></div>
<div class="a" style="left:1532px;top:111px;width:1px;height:2px;background:rgba(206,145,120,0.3)"></div>
<div class="a" style="left:1533px;top:111px;width:9px;height:2px;background:rgba(206,145,120,0.55)"></div>
<div class="a" style="left:1542px;top:111px;width:1px;height:2px;background:rgba(206,145,120,0.3)"></div>
<div class="a" style="left:1543px;top:111px;width:7px;height:2px;background:rgba(206,145,120,0.55)"></div>
<div class="a" style="left:1550px;top:111px;width:1px;height:2px;background:rgba(206,145,120,0.3)"></div>
<div class="a" style="left:1551px;top:111px;width:6px;height:2px;background:rgba(206,145,120,0.55)"></div>
<div class="a" style="left:1558px;top:111px;width:4px;height:2px;background:rgba(206,145,120,0.55)"></div>
<div class="a" style="left:1562px;top:111px;width:1px;height:2px;background:rgba(206,145,120,0.3)"></div>
<div class="a" style="left:1493px;top:115px;width:1px;height:2px;background:rgba(106,153,85,0.55)"></div>
<div class="a" style="left:1495px;top:115px;width:6px;height:2px;background:rgba(106,153,85,0.55)"></div>
<div class="a" style="left:1502px;top:115px;width:7px;height:2px;background:rgba(106,153,85,0.55)"></div>
<div class="a" style="left:1510px;top:115px;width:14px;height:2px;background:rgba(106,153,85,0.55)"></div>
<div class="a" style="left:1493px;top:117px;width:4px;height:2px;background:rgba(86,156,214,0.55)"></div>
<div class="a" style="left:1497px;top:118px;width:1px;height:1px;background:rgba(86,156,214,0.5)"></div>
<div class="a" style="left:1498px;top:117px;width:6px;height:2px;background:rgba(86,156,214,0.55)"></div>
<div class="a" style="left:1504px;top:118px;width:1px;height:1px;background:rgba(86,156,214,0.5)"></div>
<div class="a" style="left:1505px;top:117px;width:4px;height:2px;background:rgba(86,156,214,0.55)"></div>
<div class="a" style="left:1509px;top:118px;width:1px;height:1px;background:rgba(86,156,214,0.5)"></div>
<div class="a" style="left:1510px;top:117px;width:2px;height:2px;background:rgba(86,156,214,0.55)"></div>
<div class="a" style="left:1512px;top:118px;width:1px;height:1px;background:rgba(86,156,214,0.5)"></div>
<div class="a" style="left:1513px;top:117px;width:6px;height:2px;background:rgba(86,156,214,0.55)"></div>
<div class="a" style="left:1520px;top:117px;width:1px;height:2px;background:rgba(212,212,212,0.3)"></div>
<div class="a" style="left:1522px;top:117px;width:1px;height:2px;background:rgba(206,145,120,0.3)"></div>
<div class="a" style="left:1523px;top:117px;width:7px;height:2px;background:rgba(206,145,120,0.55)"></div>
<div class="a" style="left:1530px;top:117px;width:1px;height:2px;background:rgba(206,145,120,0.3)"></div>
<div class="a" style="left:1493px;top:119px;width:4px;height:2px;background:rgba(86,156,214,0.55)"></div>
<div class="a" style="left:1497px;top:120px;width:1px;height:1px;background:rgba(86,156,214,0.5)"></div>
<div class="a" style="left:1498px;top:119px;width:6px;height:2px;background:rgba(86,156,214,0.55)"></div>
<div class="a" style="left:1504px;top:120px;width:1px;height:1px;background:rgba(86,156,214,0.5)"></div>
<div class="a" style="left:1505px;top:119px;width:4px;height:2px;background:rgba(86,156,214,0.55)"></div>
<div class="a" style="left:1509px;top:120px;width:1px;height:1px;background:rgba(86,156,214,0.5)"></div>
<div class="a" style="left:1510px;top:119px;width:2px;height:2px;background:rgba(86,156,214,0.55)"></div>
<div class="a" style="left:1512px;top:120px;width:1px;height:1px;background:rgba(86,156,214,0.5)"></div>
<div class="a" style="left:1513px;top:119px;width:4px;height:2px;background:rgba(86,156,214,0.55)"></div>
<div class="a" style="left:1518px;top:119px;width:1px;height:2px;background:rgba(212,212,212,0.3)"></div>
<div class="a" style="left:1520px;top:119px;width:1px;height:2px;background:rgba(206,145,120,0.3)"></div>
<div class="a" style="left:1521px;top:119px;width:8px;height:2px;background:rgba(206,145,120,0.55)"></div>
<div class="a" style="left:1529px;top:119px;width:1px;height:2px;background:rgba(206,145,120,0.3)"></div>
<div class="a" style="left:1493px;top:123px;width:1px;height:2px;background:rgba(106,153,85,0.55)"></div>
<div class="a" style="left:1495px;top:123px;width:6px;height:2px;background:rgba(106,153,85,0.55)"></div>
<div class="a" style="left:1502px;top:123px;width:9px;height:2px;background:rgba(106,153,85,0.55)"></div>
<div class="a" style="left:1512px;top:123px;width:14px;height:2px;background:rgba(106,153,85,0.55)"></div>
<div class="a" style="left:1493px;top:125px;width:4px;height:2px;background:rgba(86,156,214,0.55)"></div>
<div class="a" style="left:1497px;top:126px;width:1px;height:1px;background:rgba(86,156,214,0.5)"></div>
<div class="a" style="left:1498px;top:125px;width:6px;height:2px;background:rgba(86,156,214,0.55)"></div>
<div class="a" style="left:1504px;top:126px;width:1px;height:1px;background:rgba(86,156,214,0.5)"></div>
<div class="a" style="left:1505px;top:125px;width:2px;height:2px;background:rgba(86,156,214,0.55)"></div>
<div class="a" style="left:1507px;top:126px;width:1px;height:1px;background:rgba(86,156,214,0.5)"></div>
<div class="a" style="left:1508px;top:125px;width:11px;height:2px;background:rgba(86,156,214,0.55)"></div>
<div class="a" style="left:1519px;top:126px;width:1px;height:1px;background:rgba(86,156,214,0.5)"></div>
<div class="a" style="left:1520px;top:125px;width:2px;height:2px;background:rgba(86,156,214,0.55)"></div>
<div class="a" style="left:1523px;top:125px;width:1px;height:2px;background:rgba(212,212,212,0.3)"></div>
<div class="a" style="left:1524px;top:125px;width:2px;height:2px;background:rgba(206,145,120,0.3)"></div>
<div class="a" style="left:1493px;top:129px;width:1px;height:2px;background:rgba(106,153,85,0.55)"></div>
<div class="a" style="left:1495px;top:129px;width:4px;height:2px;background:rgba(106,153,85,0.55)"></div>
<div class="a" style="left:1500px;top:129px;width:3px;height:2px;background:rgba(106,153,85,0.55)"></div>
<div class="a" style="left:1504px;top:129px;width:3px;height:2px;background:rgba(106,153,85,0.55)"></div>
<div class="a" style="left:1508px;top:129px;width:6px;height:2px;background:rgba(106,153,85,0.55)"></div>
<div class="a" style="left:1515px;top:129px;width:4px;height:2px;background:rgba(106,153,85,0.55)"></div>
<div class="a" style="left:1520px;top:129px;width:6px;height:2px;background:rgba(106,153,85,0.55)"></div>
<div class="a" style="left:1493px;top:131px;width:4px;height:2px;background:rgba(86,156,214,0.55)"></div>
<div class="a" style="left:1497px;top:132px;width:1px;height:1px;background:rgba(86,156,214,0.5)"></div>
<div class="a" style="left:1498px;top:131px;width:6px;height:2px;background:rgba(86,156,214,0.55)"></div>
<div class="a" style="left:1504px;top:132px;width:1px;height:1px;background:rgba(86,156,214,0.5)"></div>
<div class="a" style="left:1505px;top:131px;width:4px;height:2px;background:rgba(86,156,214,0.55)"></div>
<div class="a" style="left:1510px;top:131px;width:1px;height:2px;background:rgba(212,212,212,0.3)"></div>
<div class="a" style="left:1512px;top:131px;width:1px;height:2px;background:rgba(206,145,120,0.3)"></div>
<div class="a" style="left:1513px;top:131px;width:5px;height:2px;background:rgba(206,145,120,0.55)"></div>
<div class="a" style="left:1518px;top:131px;width:1px;height:2px;background:rgba(206,145,120,0.3)"></div>
<div class="a" style="left:1493px;top:135px;width:8px;height:2px;background:rgba(106,153,85,0.55)"></div>
<div class="a" style="left:1502px;top:135px;width:8px;height:2px;background:rgba(106,153,85,0.55)"></div>
<div class="a" style="left:1511px;top:135px;width:4px;height:2px;background:rgba(106,153,85,0.55)"></div>
<div class="a" style="left:1493px;top:137px;width:4px;height:2px;background:rgba(86,156,214,0.55)"></div>
<div class="a" style="left:1497px;top:138px;width:1px;height:1px;background:rgba(86,156,214,0.5)"></div>
<div class="a" style="left:1498px;top:137px;width:6px;height:2px;background:rgba(86,156,214,0.55)"></div>
<div class="a" style="left:1504px;top:138px;width:1px;height:1px;background:rgba(86,156,214,0.5)"></div>
<div class="a" style="left:1505px;top:137px;width:7px;height:2px;background:rgba(86,156,214,0.55)"></div>
<div class="a" style="left:1512px;top:138px;width:1px;height:1px;background:rgba(86,156,214,0.5)"></div>
<div class="a" style="left:1513px;top:137px;width:8px;height:2px;background:rgba(86,156,214,0.55)"></div>
<div class="a" style="left:1521px;top:138px;width:1px;height:1px;background:rgba(86,156,214,0.5)"></div>
<div class="a" style="left:1522px;top:137px;width:4px;height:2px;background:rgba(86,156,214,0.55)"></div>
<div class="a" style="left:1527px;top:137px;width:1px;height:2px;background:rgba(212,212,212,0.3)"></div>
<div class="a" style="left:1529px;top:137px;width:2px;height:2px;background:rgba(212,212,212,0.55)"></div>
<div class="a" style="left:1493px;top:141px;width:1px;height:2px;background:rgba(106,153,85,0.55)"></div>
<div class="a" style="left:1495px;top:141px;width:7px;height:2px;background:rgba(106,153,85,0.55)"></div>
<div class="a" style="left:1503px;top:141px;width:3px;height:2px;background:rgba(106,153,85,0.55)"></div>
<div class="a" style="left:1507px;top:141px;width:6px;height:2px;background:rgba(106,153,85,0.55)"></div>
<div class="a" style="left:1514px;top:141px;width:5px;height:2px;background:rgba(106,153,85,0.55)"></div>
<div class="a" style="left:1520px;top:141px;width:4px;height:2px;background:rgba(106,153,85,0.55)"></div>
<div class="a" style="left:1525px;top:141px;width:3px;height:2px;background:rgba(106,153,85,0.55)"></div>
<div class="a" style="left:1529px;top:141px;width:3px;height:2px;background:rgba(106,153,85,0.55)"></div>
<div class="a" style="left:1533px;top:141px;width:6px;height:2px;background:rgba(106,153,85,0.55)"></div>
<div class="a" style="left:1540px;top:141px;width:4px;height:2px;background:rgba(106,153,85,0.55)"></div>
<div class="a" style="left:1545px;top:141px;width:6px;height:2px;background:rgba(106,153,85,0.55)"></div>
<div class="a" style="left:1493px;top:143px;width:4px;height:2px;background:rgba(86,156,214,0.55)"></div>
<div class="a" style="left:1497px;top:144px;width:1px;height:1px;background:rgba(86,156,214,0.5)"></div>
<div class="a" style="left:1498px;top:143px;width:6px;height:2px;background:rgba(86,156,214,0.55)"></div>
<div class="a" style="left:1504px;top:144px;width:1px;height:1px;background:rgba(86,156,214,0.5)"></div>
<div class="a" style="left:1505px;top:143px;width:6px;height:2px;background:rgba(86,156,214,0.55)"></div>
<div class="a" style="left:1511px;top:144px;width:1px;height:1px;background:rgba(86,156,214,0.5)"></div>
<div class="a" style="left:1512px;top:143px;width:5px;height:2px;background:rgba(86,156,214,0.55)"></div>
<div class="a" style="left:1517px;top:144px;width:1px;height:1px;background:rgba(86,156,214,0.5)"></div>
<div class="a" style="left:1518px;top:143px;width:4px;height:2px;background:rgba(86,156,214,0.55)"></div>
<div class="a" style="left:1522px;top:144px;width:1px;height:1px;background:rgba(86,156,214,0.5)"></div>
<div class="a" style="left:1523px;top:143px;width:4px;height:2px;background:rgba(86,156,214,0.55)"></div>
<div class="a" style="left:1527px;top:144px;width:1px;height:1px;background:rgba(86,156,214,0.5)"></div>
<div class="a" style="left:1528px;top:143px;width:7px;height:2px;background:rgba(86,156,214,0.55)"></div>
<div class="a" style="left:1536px;top:143px;width:1px;height:2px;background:rgba(212,212,212,0.3)"></div>
<div class="a" style="left:1538px;top:143px;width:4px;height:2px;background:rgba(212,212,212,0.55)"></div>
<div class="a" style="left:1493px;top:147px;width:1px;height:2px;background:rgba(106,153,85,0.55)"></div>
<div class="a" style="left:1495px;top:147px;width:2px;height:2px;background:rgba(106,153,85,0.55)"></div>
<div class="a" style="left:1498px;top:147px;width:3px;height:2px;background:rgba(106,153,85,0.55)"></div>
<div class="a" style="left:1502px;top:147px;width:4px;height:2px;background:rgba(106,153,85,0.55)"></div>
<div class="a" style="left:1507px;top:147px;width:4px;height:2px;background:rgba(106,153,85,0.55)"></div>
<div class="a" style="left:1512px;top:147px;width:7px;height:2px;background:rgba(106,153,85,0.55)"></div>
<div class="a" style="left:1520px;top:147px;width:2px;height:2px;background:rgba(106,153,85,0.55)"></div>
<div class="a" style="left:1523px;top:147px;width:4px;height:2px;background:rgba(106,153,85,0.55)"></div>
<div class="a" style="left:1528px;top:147px;width:4px;height:2px;background:rgba(106,153,85,0.55)"></div>
<div class="a" style="left:1533px;top:147px;width:4px;height:2px;background:rgba(106,153,85,0.55)"></div>
<div class="a" style="left:1538px;top:147px;width:4px;height:2px;background:rgba(106,153,85,0.55)"></div>
<div class="a" style="left:1493px;top:149px;width:4px;height:2px;background:rgba(86,156,214,0.55)"></div>
<div class="a" style="left:1497px;top:150px;width:1px;height:1px;background:rgba(86,156,214,0.5)"></div>
<div class="a" style="left:1498px;top:149px;width:6px;height:2px;background:rgba(86,156,214,0.55)"></div>
<div class="a" style="left:1504px;top:150px;width:1px;height:1px;background:rgba(86,156,214,0.5)"></div>
<div class="a" style="left:1505px;top:149px;width:7px;height:2px;background:rgba(86,156,214,0.55)"></div>
<div class="a" style="left:1512px;top:150px;width:1px;height:1px;background:rgba(86,156,214,0.5)"></div>
<div class="a" style="left:1513px;top:149px;width:4px;height:2px;background:rgba(86,156,214,0.55)"></div>
<div class="a" style="left:1517px;top:150px;width:1px;height:1px;background:rgba(86,156,214,0.5)"></div>
<div class="a" style="left:1518px;top:149px;width:4px;height:2px;background:rgba(86,156,214,0.55)"></div>
<div class="a" style="left:1523px;top:149px;width:1px;height:2px;background:rgba(212,212,212,0.3)"></div>
<div class="a" style="left:1525px;top:149px;width:1px;height:2px;background:rgba(206,145,120,0.3)"></div>
<div class="a" style="left:1526px;top:149px;width:5px;height:2px;background:rgba(206,145,120,0.55)"></div>
<div class="a" style="left:1531px;top:149px;width:1px;height:2px;background:rgba(206,145,120,0.3)"></div>
<div class="a" style="left:1493px;top:153px;width:5px;height:2px;background:rgba(106,153,85,0.55)"></div>
<div class="a" style="left:1499px;top:153px;width:4px;height:2px;background:rgba(106,153,85,0.55)"></div>
<div class="a" style="left:1504px;top:153px;width:7px;height:2px;background:rgba(106,153,85,0.55)"></div>
<div class="a" style="left:1512px;top:153px;width:5px;height:2px;background:rgba(106,153,85,0.55)"></div>
<div class="a" style="left:1493px;top:155px;width:4px;height:2px;background:rgba(86,156,214,0.55)"></div>
<div class="a" style="left:1497px;top:156px;width:1px;height:1px;background:rgba(86,156,214,0.5)"></div>
<div class="a" style="left:1498px;top:155px;width:6px;height:2px;background:rgba(86,156,214,0.55)"></div>
<div class="a" style="left:1504px;top:156px;width:1px;height:1px;background:rgba(86,156,214,0.5)"></div>
<div class="a" style="left:1505px;top:155px;width:4px;height:2px;background:rgba(86,156,214,0.55)"></div>
<div class="a" style="left:1509px;top:156px;width:1px;height:1px;background:rgba(86,156,214,0.5)"></div>
<div class="a" style="left:1510px;top:155px;width:4px;height:2px;background:rgba(86,156,214,0.55)"></div>
<div class="a" style="left:1514px;top:156px;width:1px;height:1px;background:rgba(86,156,214,0.5)"></div>
<div class="a" style="left:1515px;top:155px;width:7px;height:2px;background:rgba(86,156,214,0.55)"></div>
<div class="a" style="left:1522px;top:156px;width:1px;height:1px;background:rgba(86,156,214,0.5)"></div>
<div class="a" style="left:1523px;top:155px;width:5px;height:2px;background:rgba(86,156,214,0.55)"></div>
<div class="a" style="left:1529px;top:155px;width:1px;height:2px;background:rgba(212,212,212,0.3)"></div>
<div class="a" style="left:1531px;top:155px;width:1px;height:2px;background:rgba(206,145,120,0.3)"></div>
<div class="a" style="left:1534px;top:155px;width:7px;height:2px;background:rgba(206,145,120,0.55)"></div>
<div class="a" style="left:1541px;top:155px;width:1px;height:2px;background:rgba(206,145,120,0.3)"></div>
<div class="a" style="left:1493px;top:159px;width:6px;height:2px;background:rgba(106,153,85,0.55)"></div>
<div class="a" style="left:1500px;top:159px;width:4px;height:2px;background:rgba(106,153,85,0.55)"></div>
<div class="a" style="left:1505px;top:159px;width:2px;height:2px;background:rgba(106,153,85,0.55)"></div>
<div class="a" style="left:1508px;top:159px;width:4px;height:2px;background:rgba(106,153,85,0.55)"></div>
<div class="a" style="left:1513px;top:159px;width:4px;height:2px;background:rgba(106,153,85,0.55)"></div>
<div class="a" style="left:1518px;top:159px;width:2px;height:2px;background:rgba(106,153,85,0.55)"></div>
<div class="a" style="left:1521px;top:159px;width:4px;height:2px;background:rgba(106,153,85,0.55)"></div>
<div class="a" style="left:1526px;top:159px;width:6px;height:2px;background:rgba(106,153,85,0.55)"></div>
<div class="a" style="left:1493px;top:161px;width:4px;height:2px;background:rgba(86,156,214,0.55)"></div>
<div class="a" style="left:1497px;top:162px;width:1px;height:1px;background:rgba(86,156,214,0.5)"></div>
<div class="a" style="left:1498px;top:161px;width:6px;height:2px;background:rgba(86,156,214,0.55)"></div>
<div class="a" style="left:1504px;top:162px;width:1px;height:1px;background:rgba(86,156,214,0.5)"></div>
<div class="a" style="left:1505px;top:161px;width:4px;height:2px;background:rgba(86,156,214,0.55)"></div>
<div class="a" style="left:1509px;top:162px;width:1px;height:1px;background:rgba(86,156,214,0.5)"></div>
<div class="a" style="left:1510px;top:161px;width:4px;height:2px;background:rgba(86,156,214,0.55)"></div>
<div class="a" style="left:1514px;top:162px;width:1px;height:1px;background:rgba(86,156,214,0.5)"></div>
<div class="a" style="left:1515px;top:161px;width:5px;height:2px;background:rgba(86,156,214,0.55)"></div>
<div class="a" style="left:1520px;top:162px;width:1px;height:1px;background:rgba(86,156,214,0.5)"></div>
<div class="a" style="left:1521px;top:161px;width:2px;height:2px;background:rgba(86,156,214,0.55)"></div>
<div class="a" style="left:1523px;top:162px;width:1px;height:1px;background:rgba(86,156,214,0.5)"></div>
<div class="a" style="left:1524px;top:161px;width:4px;height:2px;background:rgba(86,156,214,0.55)"></div>
<div class="a" style="left:1528px;top:162px;width:1px;height:1px;background:rgba(86,156,214,0.5)"></div>
<div class="a" style="left:1529px;top:161px;width:4px;height:2px;background:rgba(86,156,214,0.55)"></div>
<div class="a" style="left:1534px;top:161px;width:1px;height:2px;background:rgba(212,212,212,0.3)"></div>
<div class="a" style="left:1536px;top:161px;width:1px;height:2px;background:rgba(206,145,120,0.3)"></div>
<div class="a" style="left:1537px;top:161px;width:4px;height:2px;background:rgba(206,145,120,0.55)"></div>
<div class="a" style="left:1541px;top:161px;width:1px;height:2px;background:rgba(206,145,120,0.3)"></div>
<div class="a" style="left:1493px;top:165px;width:4px;height:2px;background:rgba(106,153,85,0.55)"></div>
<div class="a" style="left:1498px;top:165px;width:7px;height:2px;background:rgba(106,153,85,0.55)"></div>
<div class="a" style="left:1506px;top:165px;width:7px;height:2px;background:rgba(106,153,85,0.55)"></div>
<div class="a" style="left:1514px;top:165px;width:3px;height:2px;background:rgba(106,153,85,0.55)"></div>
<div class="a" style="left:1518px;top:165px;width:3px;height:2px;background:rgba(106,153,85,0.55)"></div>
<div class="a" style="left:1522px;top:165px;width:6px;height:2px;background:rgba(106,153,85,0.55)"></div>
<div class="a" style="left:1529px;top:165px;width:4px;height:2px;background:rgba(106,153,85,0.55)"></div>
<div class="a" style="left:1534px;top:165px;width:6px;height:2px;background:rgba(106,153,85,0.55)"></div>
<div class="a" style="left:1493px;top:167px;width:4px;height:2px;background:rgba(86,156,214,0.55)"></div>
<div class="a" style="left:1497px;top:168px;width:1px;height:1px;background:rgba(86,156,214,0.5)"></div>
<div class="a" style="left:1498px;top:167px;width:6px;height:2px;background:rgba(86,156,214,0.55)"></div>
<div class="a" style="left:1504px;top:168px;width:1px;height:1px;background:rgba(86,156,214,0.5)"></div>
<div class="a" style="left:1505px;top:167px;width:3px;height:2px;background:rgba(86,156,214,0.55)"></div>
<div class="a" style="left:1508px;top:168px;width:1px;height:1px;background:rgba(86,156,214,0.5)"></div>
<div class="a" style="left:1509px;top:167px;width:7px;height:2px;background:rgba(86,156,214,0.55)"></div>
<div class="a" style="left:1516px;top:168px;width:1px;height:1px;background:rgba(86,156,214,0.5)"></div>
<div class="a" style="left:1517px;top:167px;width:7px;height:2px;background:rgba(86,156,214,0.55)"></div>
<div class="a" style="left:1525px;top:167px;width:1px;height:2px;background:rgba(212,212,212,0.3)"></div>
<div class="a" style="left:1527px;top:167px;width:1px;height:2px;background:rgba(206,145,120,0.3)"></div>
<div class="a" style="left:1528px;top:167px;width:1px;height:2px;background:rgba(206,145,120,0.55)"></div>
<div class="a" style="left:1529px;top:167px;width:1px;height:2px;background:rgba(206,145,120,0.3)"></div>
<div class="a" style="left:1530px;top:167px;width:1px;height:2px;background:rgba(206,145,120,0.55)"></div>
<div class="a" style="left:1531px;top:167px;width:1px;height:2px;background:rgba(206,145,120,0.3)"></div>
<div class="a" style="left:1532px;top:167px;width:1px;height:2px;background:rgba(206,145,120,0.55)"></div>
<div class="a" style="left:1533px;top:167px;width:1px;height:2px;background:rgba(206,145,120,0.3)"></div>
<div class="a" style="left:1493px;top:171px;width:4px;height:2px;background:rgba(86,156,214,0.55)"></div>
<div class="a" style="left:1497px;top:172px;width:1px;height:1px;background:rgba(86,156,214,0.5)"></div>
<div class="a" style="left:1498px;top:171px;width:6px;height:2px;background:rgba(86,156,214,0.55)"></div>
<div class="a" style="left:1504px;top:172px;width:1px;height:1px;background:rgba(86,156,214,0.5)"></div>
<div class="a" style="left:1505px;top:171px;width:4px;height:2px;background:rgba(86,156,214,0.55)"></div>
<div class="a" style="left:1509px;top:172px;width:1px;height:1px;background:rgba(86,156,214,0.5)"></div>
<div class="a" style="left:1510px;top:171px;width:3px;height:2px;background:rgba(86,156,214,0.55)"></div>
<div class="a" style="left:1513px;top:172px;width:1px;height:1px;background:rgba(86,156,214,0.5)"></div>
<div class="a" style="left:1514px;top:171px;width:3px;height:2px;background:rgba(86,156,214,0.55)"></div>
<div class="a" style="left:1518px;top:171px;width:1px;height:2px;background:rgba(212,212,212,0.3)"></div>
<div class="a" style="left:1520px;top:171px;width:1px;height:2px;background:rgba(206,145,120,0.3)"></div>
<div class="a" style="left:1521px;top:171px;width:4px;height:2px;background:rgba(206,145,120,0.55)"></div>
<div class="a" style="left:1525px;top:171px;width:1px;height:2px;background:rgba(206,145,120,0.3)"></div>
<div class="a" style="left:1493px;top:175px;width:5px;height:2px;background:rgba(106,153,85,0.55)"></div>
<div class="a" style="left:1499px;top:175px;width:5px;height:2px;background:rgba(106,153,85,0.55)"></div>
<div class="a" style="left:1505px;top:175px;width:2px;height:2px;background:rgba(106,153,85,0.55)"></div>
<div class="a" style="left:1508px;top:175px;width:3px;height:2px;background:rgba(106,153,85,0.55)"></div>
<div class="a" style="left:1512px;top:175px;width:3px;height:2px;background:rgba(106,153,85,0.55)"></div>
<div class="a" style="left:1515px;top:175px;width:1px;height:2px;background:rgba(106,153,85,0.3)"></div>
<div class="a" style="left:1516px;top:175px;width:1px;height:2px;background:rgba(106,153,85,0.55)"></div>
<div class="a" style="left:1518px;top:175px;width:4px;height:2px;background:rgba(106,153,85,0.55)"></div>
<div class="a" style="left:1523px;top:175px;width:2px;height:2px;background:rgba(106,153,85,0.55)"></div>
<div class="a" style="left:1526px;top:175px;width:4px;height:2px;background:rgba(106,153,85,0.55)"></div>
<div class="a" style="left:1531px;top:175px;width:13px;height:2px;background:rgba(106,153,85,0.55)"></div>
<div class="a" style="left:1545px;top:175px;width:3px;height:2px;background:rgba(106,153,85,0.55)"></div>
<div class="a" style="left:1493px;top:177px;width:4px;height:2px;background:rgba(86,156,214,0.55)"></div>
<div class="a" style="left:1497px;top:178px;width:1px;height:1px;background:rgba(86,156,214,0.5)"></div>
<div class="a" style="left:1498px;top:177px;width:6px;height:2px;background:rgba(86,156,214,0.55)"></div>
<div class="a" style="left:1504px;top:178px;width:1px;height:1px;background:rgba(86,156,214,0.5)"></div>
<div class="a" style="left:1505px;top:177px;width:7px;height:2px;background:rgba(86,156,214,0.55)"></div>
<div class="a" style="left:1512px;top:178px;width:1px;height:1px;background:rgba(86,156,214,0.5)"></div>
<div class="a" style="left:1513px;top:177px;width:6px;height:2px;background:rgba(86,156,214,0.55)"></div>
<div class="a" style="left:1519px;top:178px;width:1px;height:1px;background:rgba(86,156,214,0.5)"></div>
<div class="a" style="left:1520px;top:177px;width:2px;height:2px;background:rgba(86,156,214,0.55)"></div>
<div class="a" style="left:1522px;top:177px;width:1px;height:2px;background:rgba(212,212,212,0.3)"></div>
<div class="a" style="left:1493px;top:179px;width:4px;height:2px;background:rgba(86,156,214,0.55)"></div>
<div class="a" style="left:1497px;top:180px;width:1px;height:1px;background:rgba(86,156,214,0.5)"></div>
<div class="a" style="left:1498px;top:179px;width:6px;height:2px;background:rgba(86,156,214,0.55)"></div>
<div class="a" style="left:1504px;top:180px;width:1px;height:1px;background:rgba(86,156,214,0.5)"></div>
<div class="a" style="left:1505px;top:179px;width:7px;height:2px;background:rgba(86,156,214,0.55)"></div>
<div class="a" style="left:1512px;top:180px;width:1px;height:1px;background:rgba(86,156,214,0.5)"></div>
<div class="a" style="left:1513px;top:179px;width:6px;height:2px;background:rgba(86,156,214,0.55)"></div>
<div class="a" style="left:1519px;top:180px;width:1px;height:1px;background:rgba(86,156,214,0.5)"></div>
<div class="a" style="left:1520px;top:179px;width:4px;height:2px;background:rgba(86,156,214,0.55)"></div>
<div class="a" style="left:1524px;top:180px;width:1px;height:1px;background:rgba(86,156,214,0.5)"></div>
<div class="a" style="left:1525px;top:179px;width:2px;height:2px;background:rgba(86,156,214,0.55)"></div>
<div class="a" style="left:1527px;top:179px;width:1px;height:2px;background:rgba(212,212,212,0.3)"></div>
<div class="a" style="left:1493px;top:181px;width:4px;height:2px;background:rgba(86,156,214,0.55)"></div>
<div class="a" style="left:1497px;top:182px;width:1px;height:1px;background:rgba(86,156,214,0.5)"></div>
<div class="a" style="left:1498px;top:181px;width:6px;height:2px;background:rgba(86,156,214,0.55)"></div>
<div class="a" style="left:1504px;top:182px;width:1px;height:1px;background:rgba(86,156,214,0.5)"></div>
<div class="a" style="left:1505px;top:181px;width:7px;height:2px;background:rgba(86,156,214,0.55)"></div>
<div class="a" style="left:1512px;top:182px;width:1px;height:1px;background:rgba(86,156,214,0.5)"></div>
<div class="a" style="left:1513px;top:181px;width:6px;height:2px;background:rgba(86,156,214,0.55)"></div>
<div class="a" style="left:1519px;top:182px;width:1px;height:1px;background:rgba(86,156,214,0.5)"></div>
<div class="a" style="left:1520px;top:181px;width:4px;height:2px;background:rgba(86,156,214,0.55)"></div>
<div class="a" style="left:1524px;top:182px;width:1px;height:1px;background:rgba(86,156,214,0.5)"></div>
<div class="a" style="left:1525px;top:181px;width:2px;height:2px;background:rgba(86,156,214,0.55)"></div>
<div class="a" style="left:1527px;top:181px;width:1px;height:2px;background:rgba(212,212,212,0.3)"></div>
<div class="a" style="left:1493px;top:183px;width:4px;height:2px;background:rgba(86,156,214,0.55)"></div>
<div class="a" style="left:1497px;top:184px;width:1px;height:1px;background:rgba(86,156,214,0.5)"></div>
<div class="a" style="left:1498px;top:183px;width:6px;height:2px;background:rgba(86,156,214,0.55)"></div>
<div class="a" style="left:1504px;top:184px;width:1px;height:1px;background:rgba(86,156,214,0.5)"></div>
<div class="a" style="left:1505px;top:183px;width:7px;height:2px;background:rgba(86,156,214,0.55)"></div>
<div class="a" style="left:1512px;top:184px;width:1px;height:1px;background:rgba(86,156,214,0.5)"></div>
<div class="a" style="left:1513px;top:183px;width:8px;height:2px;background:rgba(86,156,214,0.55)"></div>
<div class="a" style="left:1521px;top:184px;width:1px;height:1px;background:rgba(86,156,214,0.5)"></div>
<div class="a" style="left:1522px;top:183px;width:4px;height:2px;background:rgba(86,156,214,0.55)"></div>
<div class="a" style="left:1526px;top:184px;width:1px;height:1px;background:rgba(86,156,214,0.5)"></div>
<div class="a" style="left:1527px;top:183px;width:2px;height:2px;background:rgba(86,156,214,0.55)"></div>
<div class="a" style="left:1529px;top:183px;width:1px;height:2px;background:rgba(212,212,212,0.3)"></div>
<div class="a" style="left:1482px;top:53px;width:3px;height:931px;background:linear-gradient(90deg,rgba(0,0,0,0),rgba(0,0,0,0.35))"></div>
<div class="a" style="left:1605px;top:53px;width:1px;height:931px;background:#0f1012"></div>
<div class="a" style="left:1605px;top:53px;width:14px;height:1px;background:#0f1012"></div>
<div class="a" style="left:1605px;top:203px;width:14px;height:400px;background:#454545"></div>
<div class="a" style="left:1606px;top:468px;width:13px;height:2px;background:#8c8c8c"></div>
<div class="a" style="left:409px;top:972px;width:702px;height:12px;background:#454545"></div>
<div class="a" style="left:405px;top:651px;width:394px;height:50px;border:3px solid #ff0000;border-radius:2px"></div>
<svg class="a" style="left:800px;top:667px" width="132" height="22" viewBox="0 0 132 22"><path d="M3 10.5 H116" stroke="#ff0000" stroke-width="3"/><path d="M113 6 L127.5 10.5 L113 15 Z" fill="#ff0000"/></svg>
<div class="a" style="left:938px;top:664.5px;height:26px;line-height:26px;font-size:22px;color:#ff0000;white-space:pre">From here you can set primary color for Dark Mode</div>
<div class="a" style="left:37px;top:141px;width:306px;height:32px;border:7px solid #ff0000;border-radius:4px"></div>
</body></html>
